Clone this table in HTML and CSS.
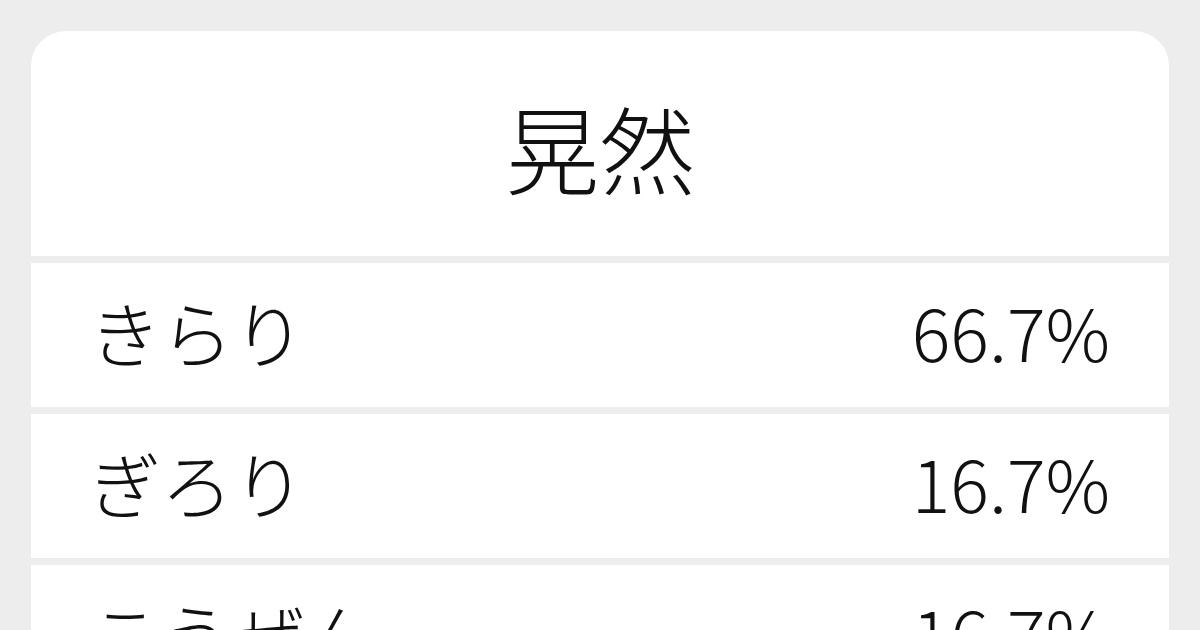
FILE: index.html
```html
<!DOCTYPE html>
<html lang="ja">
<head>
<meta charset="utf-8">
<link rel="stylesheet" href="styles.css">
</head>
<body>
<div class="card">
  <div class="title">晃然</div>
  <div class="row"><span class="reading">きらり</span><span class="pct">66.7%</span></div>
  <div class="row"><span class="reading">ぎろり</span><span class="pct">16.7%</span></div>
  <div class="row"><span class="reading">こうぜん</span><span class="pct">16.7%</span></div>
</div>
</body>
</html>
```
FILE: styles.css
```css
html, body {
  margin: 0;
  padding: 0;
}
body {
  background: #ededed;
  padding: 31px 31px 0 31px;
  height: 630px;
  box-sizing: border-box;
  overflow: hidden;
  font-family: "Noto Sans CJK JP", "Noto Sans", sans-serif;
  font-weight: 300;
  color: #111;
}
.card {
  display: flex;
  flex-direction: column;
  gap: 7px;
  border-radius: 35px 35px 0 0;
  overflow: hidden;
}
.title {
  background: #fff;
  height: 225px;
  display: flex;
  align-items: center;
  justify-content: center;
  font-size: 95px;
  padding-top: 6px;
  box-sizing: border-box;
  line-height: 1;
}
.row {
  background: #fff;
  height: 144px;
  flex: none;
  display: flex;
  align-items: center;
  justify-content: space-between;
  padding: 0 59px 9px 58px;
  box-sizing: border-box;
  font-size: 72px;
  line-height: 1;
}
```
